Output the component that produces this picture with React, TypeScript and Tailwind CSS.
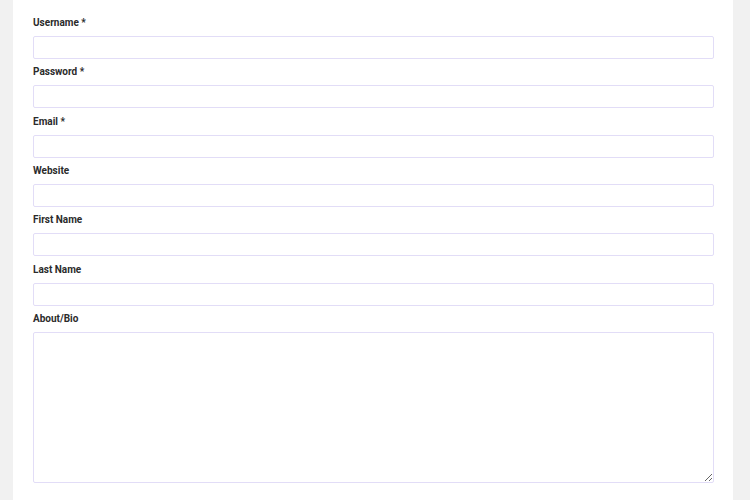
const fields = [
  { label: "Username *", type: "text" },
  { label: "Password *", type: "password" },
  { label: "Email *", type: "email" },
  { label: "Website", type: "url" },
  { label: "First Name", type: "text" },
  { label: "Last Name", type: "text" },
];

export default function App() {
  return (
    <div className="min-h-screen bg-[#f1f1f1] pl-[13px] pr-[17px] font-['Roboto',sans-serif] text-[#2b2b2b]">
      <div className="bg-white pl-5 pr-[19px] pt-[15px] pb-8">
        {fields.map((f) => (
          <div key={f.label} className="h-[49.33px]">
            <label className="block text-[10px] font-bold leading-[16px] mb-[5px]">{f.label}</label>
            <input
              type={f.type}
              className="block w-full h-[23px] border border-[#e2ddf7] rounded-[2px] bg-white px-2 text-xs outline-none"
            />
          </div>
        ))}
        <div>
          <label className="block text-[10px] font-bold leading-[16px] mb-[5px]">About/Bio</label>
          <textarea className="block w-full h-[151px] border border-[#e2ddf7] rounded-[2px] bg-white px-2 py-1 text-xs outline-none" />
        </div>
      </div>
    </div>
  );
}
